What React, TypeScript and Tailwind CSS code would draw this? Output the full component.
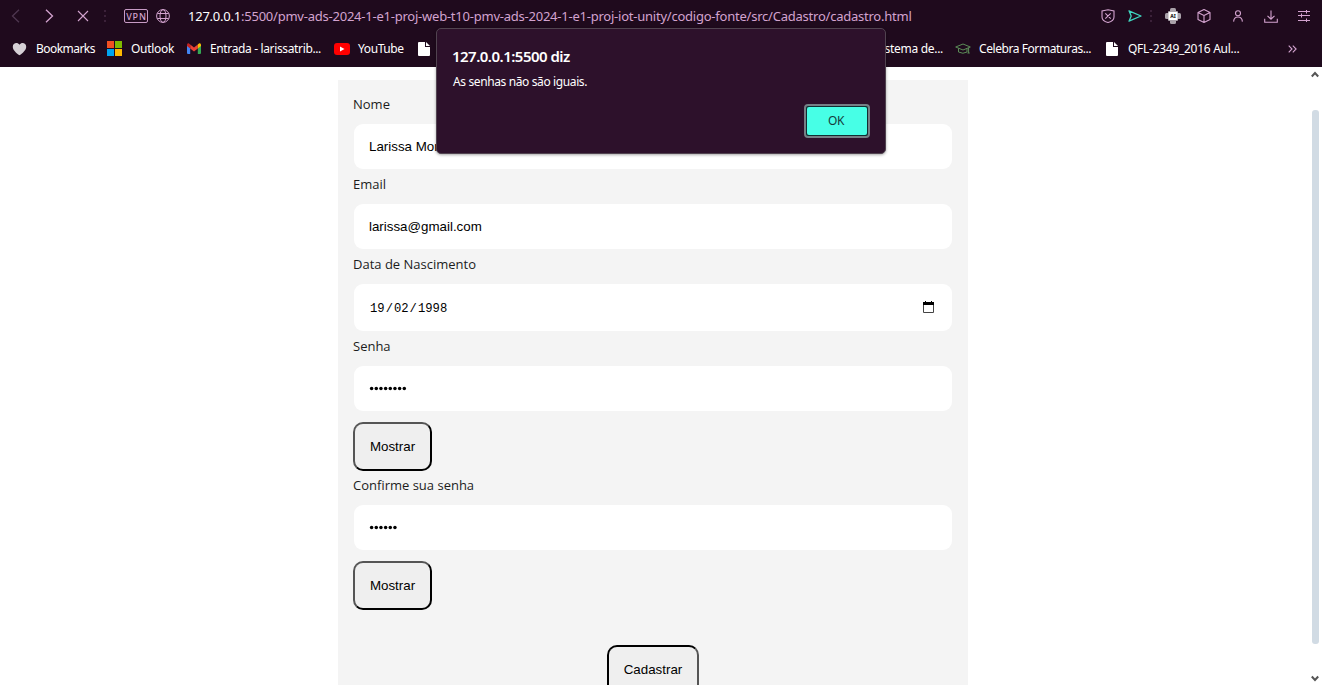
import type { ReactNode } from "react";

const PINK = "#d3a3cf";

function Cell({ className, children }: { className: string; children: ReactNode }) {
  return <div className={`flex h-full shrink-0 items-center justify-center ${className}`}>{children}</div>;
}

function Dots({ color }: { color: string }) {
  return (
    <svg width="4" height="12" viewBox="0 0 4 12" fill={color}>
      <rect x="1" y="0" width="2" height="2" />
      <rect x="1" y="5" width="2" height="2" />
      <rect x="1" y="10" width="2" height="2" />
    </svg>
  );
}

function PageIcon() {
  return (
    <svg className="shrink-0" width="12" height="14" viewBox="0 0 12 14" fill="#fff">
      <path d="M1 0H7V5H12V13Q12 14 11 14H1Q0 14 0 13V1Q0 0 1 0Z" />
      <path d="M8 0L12 4H8Z" />
    </svg>
  );
}

function Toolbar() {
  return (
    <div className="flex h-8 items-center">
      <Cell className="w-[33px] pr-[2px]">
        <svg width="9" height="14" viewBox="0 0 9 14" fill="none" stroke="#4e3750" strokeWidth="1.3"><path d="M8 .8L1.5 7L8 13.2" /></svg>
      </Cell>
      <Cell className="w-8">
        <svg width="9" height="14" viewBox="0 0 9 14" fill="none" stroke={PINK} strokeWidth="1.3"><path d="M1 .8L7.5 7L1 13.2" /></svg>
      </Cell>
      <Cell className="w-9">
        <svg width="12" height="12" viewBox="0 0 12 12" fill="none" stroke={PINK} strokeWidth="1.1"><path d="M1 1L11 11M11 1L1 11" /></svg>
      </Cell>
      <Cell className="w-2"><Dots color="#3b2139" /></Cell>
      <div className="ml-[15px] flex h-[14px] w-6 items-center justify-center rounded-[2px] border border-[#c79bc5] pl-px text-[9px] leading-none font-medium tracking-[0.8px] text-[#d3a3cf]">VPN</div>
      <svg className="ml-2" width="14" height="14" viewBox="0 0 14 14" fill="none" stroke={PINK} strokeWidth="1">
        <circle cx="7" cy="7" r="6.4" />
        <ellipse cx="7" cy="7" rx="3" ry="6.4" />
        <path d="M1.3 4.5H12.7M1.3 9.5H12.7" />
      </svg>
      <div className="ml-[18px] text-[13px] leading-8 whitespace-nowrap tracking-[-0.23px] text-[#d3a3cf]">
        <span className="text-white">127.0.0.1</span>:5500/pmv-ads-2024-1-e1-proj-web-t10-pmv-ads-2024-1-e1-proj-iot-unity/codigo-fonte/src/Cadastro/cadastro.html
      </div>
      <div className="ml-auto flex h-full items-center">
        <Cell className="w-[26px]">
          <svg width="14" height="14" viewBox="0 0 14 14" fill="none" stroke={PINK} strokeWidth="1.1">
            <path d="M7 .7L13 2V8Q13 12 7 13.5Q1 12 1 8V2ZM4.3 4.3L9.7 9.7M9.7 4.3L4.3 9.7" />
          </svg>
        </Cell>
        <Cell className="w-[26px] pl-[2px]">
          <svg width="14" height="12" viewBox="0 0 14 12" fill="none" stroke="#3fd6c0" strokeWidth="1.3" strokeLinejoin="round"><path d="M1 .8L13 6L1 11.2L3.2 6Z" /></svg>
        </Cell>
        <Cell className="w-2"><Dots color="#3b2139" /></Cell>
        <Cell className="w-9">
          <svg width="16" height="16" viewBox="0 0 16 16">
            <g fill="#aaa2aa">
              <rect x="5" y="0" width="6" height="16" rx="1.5" /><rect x="0" y="5" width="16" height="6" rx="1.5" /><rect x="3" y="3" width="10" height="10" rx="1" />
            </g>
            <rect x="3.5" y="4" width="9" height="8" rx="1" fill="#fff" />
            <text x="8" y="9.9" fontSize="5" fontWeight="800" textAnchor="middle" fill="#222">AI</text>
          </svg>
        </Cell>
        <Cell className="w-[26px]">
          <svg width="14" height="14" viewBox="0 0 14 14" fill="none" stroke={PINK} strokeWidth="1.1" strokeLinejoin="round">
            <path d="M7 .6L13 3.4V10.4L7 13.4L1 10.4V3.4ZM1 3.4L7 6.4L13 3.4M7 6.4V13.4" />
          </svg>
        </Cell>
        <Cell className="w-[42px]">
          <svg width="12" height="12" viewBox="0 0 12 12" fill="none" stroke={PINK} strokeWidth="1.1"><circle cx="6" cy="3.2" r="2.5" /><path d="M1.6 11.6Q2 7 6 7Q10 7 10.4 11.6" /></svg>
        </Cell>
        <Cell className="w-[23px]">
          <svg width="14" height="13" viewBox="0 0 14 13" fill="none" stroke={PINK} strokeWidth="1.1"><path d="M7 .5V9M3.5 5.8L7 9.2L10.5 5.8M.7 8.8V12.3H13.3V8.8" /></svg>
        </Cell>
        <Cell className="ml-1 w-9">
          <svg width="12" height="12" viewBox="0 0 12 12" fill="none" stroke={PINK}><path d="M0 1.5H12M0 5.5H12M0 10.5H12M8.5 0V3.5M3.5 3.5V7.5M8.5 8.5V12" /></svg>
        </Cell>
      </div>
    </div>
  );
}

function Bookmarks() {
  return (
    <div className="flex h-[35px] items-center pb-[2px] text-[12px] whitespace-nowrap text-white">
      <svg className="ml-3 shrink-0" width="15" height="14" viewBox="0 0 15 14" fill="#d6d0d6"><path d="M7.5 13.3C4 10.8 .8 8 .8 4.7C.8 .9 5.5 -.3 7.5 2.8C9.5 -.3 14.2 .9 14.2 4.7C14.2 8 11 10.8 7.5 13.3Z" /></svg>
      <span className="ml-[9px] w-[71px] shrink-0 tracking-[-0.55px]">Bookmarks</span>
      <svg className="shrink-0" width="15" height="15" viewBox="0 0 15 15"><path fill="#f25022" d="M0 0H7V7H0Z" /><path fill="#7fba00" d="M8 0H15V7H8Z" /><path fill="#00a4ef" d="M0 8H7V15H0Z" /><path fill="#ffb900" d="M8 8H15V15H8Z" /></svg>
      <span className="ml-[9px] w-14 shrink-0 tracking-[-0.3px]">Outlook</span>
      <svg className="shrink-0" width="14" height="11" viewBox="0 0 14 11">
        <path fill="#4285f4" d="M0 2V10Q0 11 1 11H3.2V4.5Z" /><path fill="#34a853" d="M14 2V10Q14 11 13 11H10.8V4.5Z" />
        <path fill="#ea4335" d="M3.2 1.5L7 4.4L10.8 1.5V5.5L7 8.4L3.2 5.5Z" /><path fill="#c5221f" d="M0 2Q0 0 1.7 .3L3.2 1.5V5.5L0 3Z" /><path fill="#fbbc04" d="M14 2Q14 0 12.3 .3L10.8 1.5V5.5L14 3Z" />
      </svg>
      <span className="ml-[9px] w-[124px] shrink-0 tracking-[-0.36px]">Entrada - larissatrib...</span>
      <svg className="shrink-0" width="16" height="12" viewBox="0 0 16 12"><rect width="16" height="12" rx="3" fill="#f00" /><path d="M6 3.5L10.5 6L6 8.5Z" fill="#fff" /></svg>
      <span className="ml-2 w-[60px] shrink-0 tracking-[-0.4px]">YouTube</span>
      <PageIcon />
      <span className="ml-auto w-[82px] text-right tracking-[-0.3px]">Sistema de...</span>
      <svg className="ml-3 shrink-0" width="16" height="12" viewBox="0 0 16 12" fill="none" stroke="#5c8d58" strokeWidth="1"><path d="M.7 4L8 1L15.3 4L8 7ZM3.5 5.3V9Q8 11.5 12 9V5.5M13.6 5V10M12.5 10H14.7" /></svg>
      <span className="ml-2 w-[127px] shrink-0 tracking-[-0.43px]">Celebra Formaturas...</span>
      <PageIcon />
      <span className="ml-[10px] w-[160px] shrink-0 tracking-[-0.28px]">QFL-2349_2016 Aul...</span>
      <svg className="mr-[25px] shrink-0" width="9" height="8" viewBox="0 0 9 8" fill="none" stroke={PINK} strokeWidth="1.1"><path d="M.7 .7L4 4L.7 7.3M4.8 .7L8.1 4L4.8 7.3" /></svg>
    </div>
  );
}

function Label({ children }: { children: ReactNode }) {
  return <div className="mb-[11px] h-[18px] font-['Open_Sans',sans-serif] text-[13px] leading-[18px] font-normal text-[#1c1c1c]">{children}</div>;
}

function Field({ className = "h-[45px]", children }: { className?: string; children: ReactNode }) {
  return <div className={`mx-px flex w-[598px] items-center rounded-[9px] bg-white px-[15px] font-['Liberation_Sans',sans-serif] text-[13.333px] text-black ${className}`}>{children}</div>;
}

function Password({ count }: { count: number }) {
  return (
    <svg width="60" height="6" viewBox="0 0 60 6">
      {Array.from({ length: count }, (_, i) => <circle key={i} cx={2.6 + i * 4.67} cy="2.6" r="1.75" />)}
    </svg>
  );
}

function ShowButton() {
  return <button className="mt-[11px] mb-[5px] block h-[49px] w-[79px] rounded-[10px] border-2 border-t-[#555] border-r-black border-b-black border-l-[#555] bg-[#efefef] text-[13.333px] text-black">Mostrar</button>;
}

function Dialog() {
  return (
    <div className="absolute top-7 left-[436px] flex h-[126px] w-[450px] flex-col rounded-[5px] border border-[#514350] bg-[#2d112b] px-4 text-white shadow-[0_1px_3px_rgba(0,0,0,0.35)]">
      <div className="mt-4 -ml-px text-[15px] leading-[22px] font-semibold tracking-[-0.52px]">127.0.0.1:5500 diz</div>
      <div className="mt-[6px] text-[12px] leading-[18px] tracking-[-0.38px]">As senhas não são iguais.</div>
      <button className="mt-[13px] -mr-px h-[34px] w-[66px] self-end rounded-[4px] border-2 border-[#758086] bg-[#102e32] p-px text-[12px] tracking-[-0.3px] text-[#173b3b]">
        <span className="flex h-full items-center justify-center rounded-[2px] bg-[#47ffe6] pr-[2px]">OK</span>
      </button>
    </div>
  );
}

export default function App() {
  return (
    <div className="relative flex h-[685px] w-[1322px] flex-col overflow-hidden bg-white font-['Noto_Sans',sans-serif]">
      <header className="h-[67px] shrink-0 bg-[#1f0a1d]">
        <Toolbar />
        <Bookmarks />
      </header>
      <div className="flex min-h-0 flex-1">
        <main className="mt-[13px] ml-[338px] w-[630px] bg-[#f4f4f4] p-[15px] font-['Liberation_Sans',sans-serif]">
          <Label>Nome</Label>
          <Field className="mb-[6px] h-[45px]">Larissa Moreira</Field>
          <Label>Email</Label>
          <Field className="mb-[6px] h-[45px]">larissa@gmail.com</Field>
          <Label>Data de Nascimento</Label>
          <Field className="mb-[6px] h-[47px] justify-between">
            <span className="flex pt-[4px] pl-px font-['Liberation_Mono',monospace] text-[12.2px]">
              19<span className="px-px">/</span>02<span className="px-px">/</span>1998
            </span>
            <svg className="mr-[3px] mb-px" width="11" height="12" viewBox="0 0 11 12"><path d="M.5 1.5H10.5V11.5H.5Z" fill="none" stroke="#444" /><path d="M0 1H2V0H3V1H8V0H9V1H11V4H0Z" /></svg>
          </Field>
          <Label>Senha</Label>
          <Field><Password count={8} /></Field>
          <ShowButton />
          <Label>Confirme sua senha</Label>
          <Field><Password count={6} /></Field>
          <ShowButton />
          <button className="mx-auto mt-[35px] block h-[49px] w-[92px] rounded-[10px] border-2 border-t-black border-r-[#555] border-b-[#555] border-l-black bg-[#efefef] text-[13.333px] text-black">Cadastrar</button>
        </main>
        <div className="ml-auto flex w-[12px] flex-col items-center pr-[2px]">
          <svg className="mt-1 shrink-0" width="8" height="7" viewBox="0 0 8 7" fill="none" stroke="#555" strokeWidth="2"><path d="M.8 5.5L4 2L7.2 5.5" /></svg>
          <div className="mt-8 h-[534px] w-[7px] shrink-0 rounded-[3px] bg-[#d1dbe4]" />
          <svg className="mt-[31px] shrink-0" width="8" height="7" viewBox="0 0 8 7" fill="none" stroke="#555" strokeWidth="2"><path d="M.8 1.5L4 5L7.2 1.5" /></svg>
        </div>
      </div>
      <Dialog />
    </div>
  );
}
